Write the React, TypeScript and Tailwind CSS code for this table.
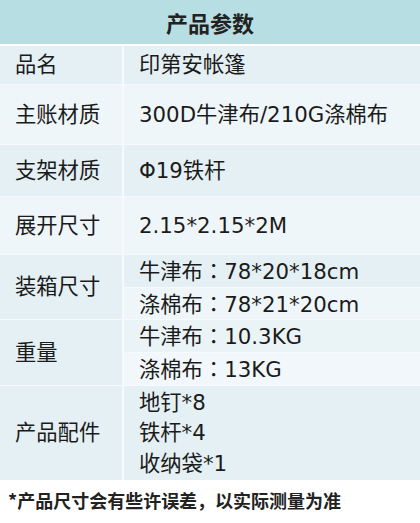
import React from "react";

const font = { fontFamily: '"DejaVu Sans", "Noto Sans CJK SC", sans-serif' };
const tc = { fontFamily: '"Noto Sans CJK TC", sans-serif' };

function Colon() {
  return <span style={tc}>：</span>;
}

function Row({
  label,
  bg,
  h,
  children,
}: {
  label: string;
  bg: string;
  h: string;
  children: React.ReactNode;
}) {
  return (
    <div className={`flex border-b border-[#f6fafc] ${h}`}>
      <div className={`w-[124px] shrink-0 flex items-center pl-[15px] border-r-2 border-[#f6fafc] ${bg}`}>
        {label}
      </div>
      <div className={`flex-1 flex flex-col justify-center pl-[15px] ${bg}`}>{children}</div>
    </div>
  );
}

export default function App() {
  return (
    <div
      className="w-[420px] h-[523px] bg-white text-[#1b1b1b] text-[21.3px] leading-none overflow-hidden"
      style={font}
    >
      <div
        className="h-[44px] bg-[#b7dee3] flex items-center justify-center text-[22px] font-bold text-[#222]"
        style={{ fontFamily: '"Noto Sans CJK SC", sans-serif' }}
      >
        产品参数
      </div>
      <div className="h-[2px] bg-white" />
      <Row label="品名" bg="bg-[#e4f0f3]" h="h-[39px]">
        <span>印第安帐篷</span>
      </Row>
      <Row label="主账材质" bg="bg-[#eff6f9]" h="h-[60px]">
        <span>300D牛津布/210G涤棉布</span>
      </Row>
      <Row label="支架材质" bg="bg-[#e4f0f3]" h="h-[52px]">
        <span>Φ19铁杆</span>
      </Row>
      <Row label="展开尺寸" bg="bg-[#eff6f9]" h="h-[58px]">
        <span>2.15*2.15*2M</span>
      </Row>
      <div className="flex border-b border-[#f6fafc] h-[65px]">
        <div className="w-[124px] shrink-0 flex items-center pl-[15px] border-r-2 border-[#f6fafc] bg-[#e4f0f3]">
          装箱尺寸
        </div>
        <div className="flex-1 flex flex-col">
          <div className="flex-1 flex items-center pl-[15px] bg-[#e4f0f3] border-b border-[#f6fafc]">
            <span>
              牛津布<Colon />78*20*18cm
            </span>
          </div>
          <div className="flex-1 flex items-center pl-[15px] bg-[#eff6f9]">
            <span>
              涤棉布<Colon />78*21*20cm
            </span>
          </div>
        </div>
      </div>
      <div className="flex border-b border-[#f6fafc] h-[66px]">
        <div className="w-[124px] shrink-0 flex items-center pl-[15px] border-r-2 border-[#f6fafc] bg-[#e4f0f3]">
          重量
        </div>
        <div className="flex-1 flex flex-col">
          <div className="flex-1 flex items-center pl-[15px] bg-[#eaf3f6] border-b border-[#f6fafc]">
            <span>
              牛津布<Colon />10.3KG
            </span>
          </div>
          <div className="flex-1 flex items-center pl-[15px] bg-[#f1f7fa]">
            <span>
              涤棉布<Colon />13KG
            </span>
          </div>
        </div>
      </div>
      <div className="flex h-[94px]">
        <div className="w-[124px] shrink-0 flex items-center pl-[15px] border-r-2 border-[#f6fafc] bg-[#e4f0f3]">
          产品配件
        </div>
        <div className="flex-1 flex flex-col justify-center pl-[15px] bg-[#e4f0f3] gap-[9px]">
          <span>地钉*8</span>
          <span>铁杆*4</span>
          <span>收纳袋*1</span>
        </div>
      </div>
      <div
        className="h-[40px] flex items-center pl-[8px] text-[18px] font-bold text-[#222]"
        style={{ fontFamily: '"Noto Sans CJK SC", sans-serif' }}
      >
        *产品尺寸会有些许误差，以实际测量为准
      </div>
    </div>
  );
}
